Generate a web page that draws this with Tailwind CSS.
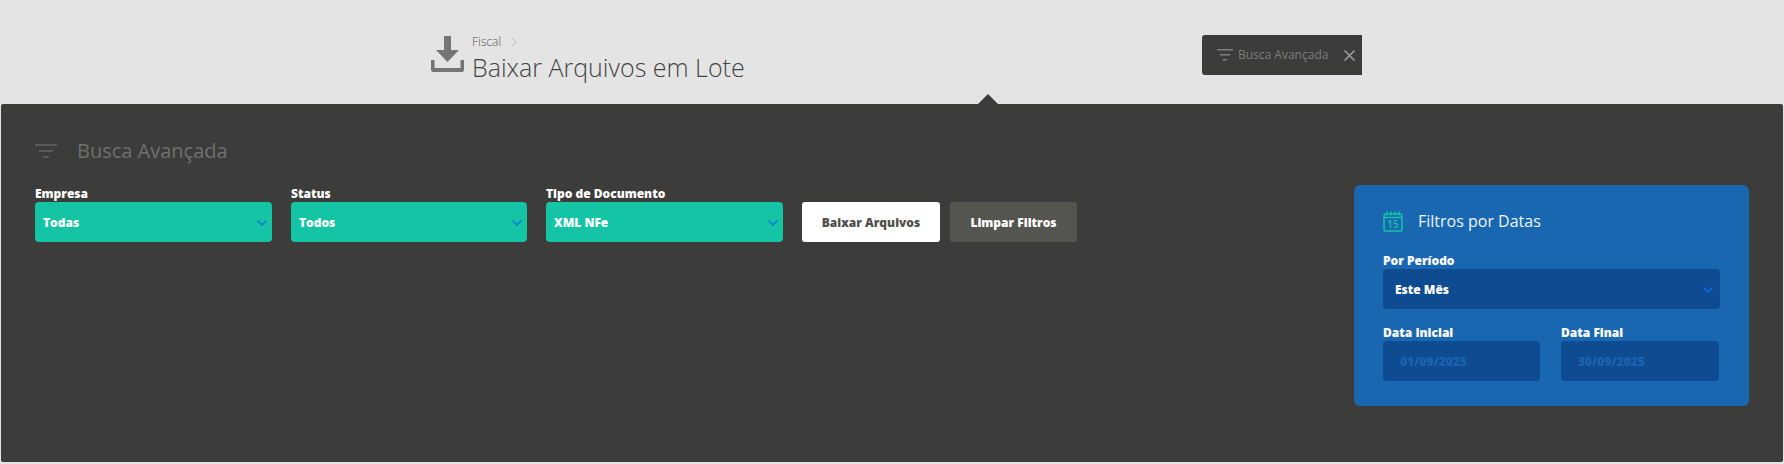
<!DOCTYPE html>
<html lang="pt-BR">
<head>
  <meta charset="UTF-8" />
  <title>Baixar Arquivos em Lote</title>
  <meta name="viewport" content="width=device-width, initial-scale=1.0" />
  <script src="https://cdn.jsdelivr.net/npm/@tailwindcss/browser@4"></script>
</head>
<body class="h-[464px] overflow-hidden bg-[#e4e4e4] font-['Open_Sans',sans-serif]">
  <!-- Header -->
  <header class="flex h-[104px]">
    <svg class="ml-[431px] mt-[36px] h-[36px] w-[33px] text-[#757575]" viewBox="0 0 33 36" fill="currentColor">
      <path d="M13 0h7v14h8L16.500 26 5 14h8z"/>
      <path d="M0 24h3.500v8h26v-8H33v9.500a2.500 2.500 0 0 1-2.500 2.500h-28A2.500 2.500 0 0 1 0 33.500z"/>
    </svg>
    <div class="ml-[8px] mt-[33px]">
      <div class="flex h-[17px] items-center text-[12px] font-light leading-none text-[#555]">
        Fiscal
        <svg class="ml-[10px] h-[10px] w-[6px] text-[#bbb]" viewBox="0 0 6 10" fill="none" stroke="currentColor"><path d="M.5.500 5 5 .5 9.500"/></svg>
      </div>
      <h1 class="text-[25px] font-light leading-[34px] text-[#444]">Baixar Arquivos em Lote</h1>
    </div>
    <div class="ml-auto mr-[422px] mt-[35px] flex h-[40px] w-[160px] items-center rounded-l-[3px] bg-[#3c3c3a] pl-[15px] text-[12px] text-[#7d7d7d]">
      <svg class="h-[12px] w-[16px] text-[#808080]" viewBox="0 0 16 12" fill="currentColor"><path d="M0 0h16v1.500H0zM3 5h10v1.500H3zM6 10h4v1.500H6z"/></svg>
      <span class="ml-[5px]">Busca Avançada</span>
      <svg class="ml-[16px] h-[11px] w-[11px] text-[#a0a0a0]" viewBox="0 0 11 11" fill="none" stroke="currentColor" stroke-width="1.500"><path d="M.5.500l10 10M10.500.500l-10 10"/></svg>
    </div>
  </header>

  <!-- Busca Avancada -->
  <main class="relative mx-px flex h-[358px] items-start justify-between rounded-[2px] bg-[#3c3c3a] px-[34px]">
    <div class="absolute left-[977px] top-[-10px] h-0 w-0 border-x-[10px] border-b-[10px] border-x-transparent border-b-[#3c3c3a]"></div>

    <div>
      <div class="mt-[35px] flex h-[24px] items-center">
        <svg class="h-[14px] w-[22px] text-[#5a5a58]" viewBox="0 0 22 14" fill="currentColor"><path d="M0 0h22v2H0zM4 6h14v2H4zM8 12h6v2H8z"/></svg>
        <h2 class="ml-[20px] text-[20px] leading-none text-[#70706e]">Busca Avançada</h2>
      </div>

      <div class="mt-[22px] flex items-end">
        <div class="w-[237px]">
          <label class="block h-[17px] text-[12px] font-extrabold leading-[17px] text-white">Empresa</label>
          <div class="flex h-[40px] items-center justify-between rounded-[4px] bg-[#14c4a5] pl-[8px] pr-[5px] pt-px text-[12px] font-extrabold text-white">
            Todas
            <svg class="h-[6px] w-[10px] text-[#0a78d8]" viewBox="0 0 10 6" fill="none" stroke="currentColor" stroke-width="1.500"><path d="M.5.500 5 5 9.500.500"/></svg>
          </div>
        </div>
        <div class="ml-[19px] w-[236px]">
          <label class="block h-[17px] text-[12px] font-extrabold leading-[17px] text-white">Status</label>
          <div class="flex h-[40px] items-center justify-between rounded-[4px] bg-[#14c4a5] pl-[8px] pr-[5px] pt-px text-[12px] font-extrabold text-white">
            Todos
            <svg class="h-[6px] w-[10px] text-[#0a78d8]" viewBox="0 0 10 6" fill="none" stroke="currentColor" stroke-width="1.500"><path d="M.5.500 5 5 9.500.500"/></svg>
          </div>
        </div>
        <div class="ml-[19px] w-[237px]">
          <label class="block h-[17px] text-[12px] font-extrabold leading-[17px] text-white">Tipo de Documento</label>
          <div class="flex h-[40px] items-center justify-between rounded-[4px] bg-[#14c4a5] pl-[8px] pr-[5px] pt-px text-[12px] font-extrabold text-white">
            XML NFe
            <svg class="h-[6px] w-[10px] text-[#0a78d8]" viewBox="0 0 10 6" fill="none" stroke="currentColor" stroke-width="1.500"><path d="M.5.500 5 5 9.500.500"/></svg>
          </div>
        </div>
        <button class="ml-[19px] h-[40px] w-[138px] rounded-[3px] bg-white pt-px text-[12px] font-extrabold text-[#4f4f4b]">Baixar Arquivos</button>
        <button class="ml-[10px] h-[40px] w-[127px] rounded-[3px] bg-[#55554f] pt-px text-[12px] font-extrabold text-white">Limpar Filtros</button>
      </div>
    </div>

    <!-- Filtros por Datas -->
    <section class="mt-[81px] h-[221px] w-[395px] rounded-[6px] bg-[#1a67b1] pl-[29px] pr-[29px] pt-[26px]">
      <div class="flex h-[20px] items-center">
        <svg class="h-[21px] w-[20px] text-[#14c4a5]" viewBox="0 0 20 21" fill="none" stroke="currentColor">
          <rect x="1" y="3" width="18" height="17" rx="1.500" stroke-width="1.500"/>
          <path d="M1 6.500h18" stroke-width="1.500"/>
          <path d="M4 .5v4M8 .5v4M12 .5v4M16 .5v4" stroke-width="1.500"/>
          <text x="10" y="17" text-anchor="middle" font-size="10" font-weight="600" fill="currentColor" stroke="none">15</text>
        </svg>
        <h3 class="ml-[15px] text-[16px] leading-none text-[#eef4fb]">Filtros por Datas</h3>
      </div>
      <label class="mt-[20px] block h-[18px] text-[12px] font-extrabold leading-[20px] text-white">Por Período</label>
      <div class="flex h-[40px] items-center justify-between rounded-[4px] bg-[#0f4b90] pl-[12px] pr-[7px] pt-px text-[12px] font-extrabold text-white">
        Este Mês
        <svg class="h-[6px] w-[10px] text-[#0a6fe0]" viewBox="0 0 10 6" fill="none" stroke="currentColor" stroke-width="1.500"><path d="M.5.500 5 5 9.500.500"/></svg>
      </div>
      <div class="mt-[15px] flex gap-[21px]">
        <div class="w-[157px]">
          <label class="block h-[17px] text-[12px] font-extrabold leading-[17px] text-white">Data Inicial</label>
          <div class="flex h-[40px] items-center rounded-[4px] bg-[#0f4b90] pl-[17px] pt-px text-[12px] font-extrabold text-[#1b63b0]">01/09/2025</div>
        </div>
        <div class="w-[158px]">
          <label class="block h-[17px] text-[12px] font-extrabold leading-[17px] text-white">Data Final</label>
          <div class="flex h-[40px] items-center rounded-[4px] bg-[#0f4b90] pl-[17px] pt-px text-[12px] font-extrabold text-[#1b63b0]">30/09/2025</div>
        </div>
      </div>
    </section>
  </main>
</body>
</html>
